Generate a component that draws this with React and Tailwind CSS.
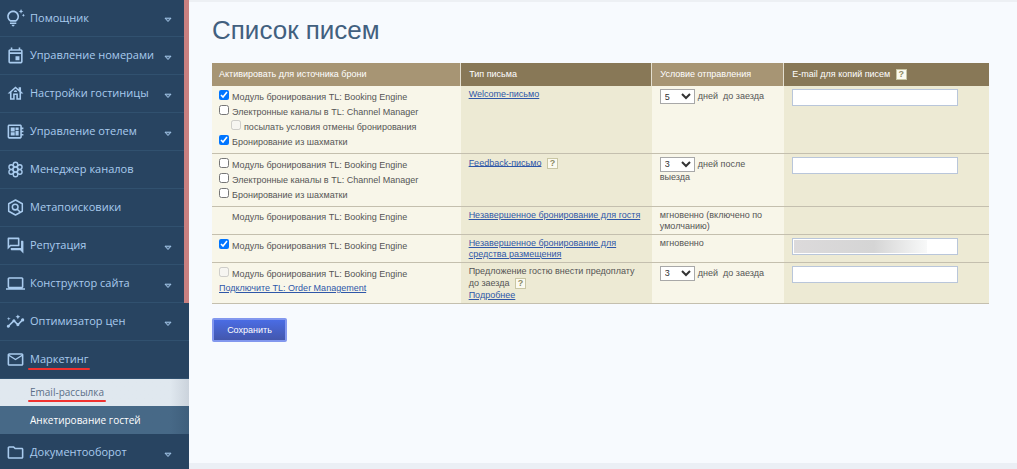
import {
  MdLaptop,
  MdMailOutline,
  MdOutlineDeveloperBoard,
  MdOutlineEvent,
  MdOutlineFolder,
  MdOutlineForum,
  MdOutlineHouse,
  MdOutlineInsights,
  MdOutlineTipsAndUpdates,
} from "react-icons/md";

const MENU = [
  { label: "Помощник", icon: MdOutlineTipsAndUpdates, arrow: true },
  { label: "Управление номерами", icon: MdOutlineEvent, arrow: true },
  { label: "Настройки гостиницы", icon: MdOutlineHouse, arrow: true },
  { label: "Управление отелем", icon: MdOutlineDeveloperBoard, arrow: true },
  { label: "Менеджер каналов", icon: ChannelsIcon },
  { label: "Метапоисковики", icon: MetaSearchIcon },
  { label: "Репутация", icon: MdOutlineForum, arrow: true },
  { label: "Конструктор сайта", icon: MdLaptop, arrow: true },
  { label: "Оптимизатор цен", icon: MdOutlineInsights, arrow: true },
  { label: "Маркетинг", icon: MdMailOutline, marked: true },
];

const ENGINE = "Модуль бронирования TL: Booking Engine";
const CHANNELS = "Электронные каналы в TL: Channel Manager";
const BOARD = "Бронирование из шахматки";

export default function App() {
  return (
    <div className="flex min-h-screen bg-[#f7fafe] font-['Liberation_Sans',Arial,sans-serif]">
      <Sidebar />
      <main className="flex min-w-0 flex-1 flex-col border-t-2 border-b-6 border-t-[#edf0f4] border-b-[#ebeff5] pr-7 pl-[23px]">
        <h1 className="mt-3 text-[26px] leading-8 text-[#42607f]">Список писем</h1>
        <LettersTable />
        <div className="mt-3">
          <button
            type="button"
            className="h-6 w-[75px] rounded-xs border-2 border-[#8297ee] bg-linear-to-b from-[#4a6ce4] to-[#4357ad] text-[9px] text-white"
          >
            Сохранить
          </button>
        </div>
      </main>
    </div>
  );
}

function Sidebar() {
  return (
    <aside className="relative h-screen w-[189px] shrink-0 overflow-hidden bg-[#284461] font-['Open_Sans','Noto_Sans',sans-serif] text-[11px] text-[#a9cbee]">
      <nav>
        {MENU.map((item) => (
          <MenuItem key={item.label} {...item} />
        ))}
        <a
          href="#mailing"
          className="flex h-[27px] items-center bg-linear-to-r from-[#e0e8ef] from-90% to-[#cbd3dc] pl-[30px] text-[10px] text-[#5c6f88]"
        >
          <span className="relative">
            Email-рассылка
            <Underline />
          </span>
        </a>
        <a
          href="#survey"
          className="flex h-7 items-center bg-linear-to-r from-[#476987] from-90% to-[#3f5f7c] pl-[30px] text-[10px] font-medium text-white"
        >
          Анкетирование гостей
        </a>
        <MenuItem label="Документооборот" icon={MdOutlineFolder} arrow />
      </nav>
      {/* Scroll thumb */}
      <div className="absolute top-0 right-0 h-[303px] w-[5px] bg-[#c98080]" />
    </aside>
  );
}

function MenuItem({ label, icon: Icon, arrow, marked }) {
  return (
    <a
      href="#menu"
      className="flex h-[38px] items-center border-b border-[#31516f] pr-[17px] pl-[6px] first:h-[37px]"
    >
      <Icon className="mr-[5px] size-[19px] shrink-0" />
      <span className="relative whitespace-nowrap">
        {label}
        {marked && <Underline />}
      </span>
      {arrow && (
        <svg viewBox="0 0 8 6" className="mt-1 ml-auto h-[6px] w-2 shrink-0" fill="none" stroke="currentColor">
          <path d="M1 1.2h6L4 4.5z" fill="currentColor" fillOpacity="0.25" />
        </svg>
      )}
    </a>
  );
}

function Underline() {
  return <span className="absolute -inset-x-[2px] -bottom-[2px] h-[2px] rounded-full bg-[#f0312f]" />;
}

function ChannelsIcon({ className }) {
  return (
    <svg viewBox="0 0 24 24" className={className} fill="none" stroke="currentColor" strokeWidth="1.7">
      <circle cx="12" cy="12" r="3" />
      <circle cx="12" cy="5.8" r="2.9" />
      <circle cx="12" cy="18.2" r="2.9" />
      <circle cx="6.6" cy="8.9" r="2.9" />
      <circle cx="17.4" cy="8.9" r="2.9" />
      <circle cx="6.6" cy="15.1" r="2.9" />
      <circle cx="17.4" cy="15.1" r="2.9" />
    </svg>
  );
}

function MetaSearchIcon({ className }) {
  return (
    <svg viewBox="0 0 24 24" className={className} fill="none" stroke="currentColor" strokeWidth="1.9">
      <path d="M12 2.5l8.6 4.8v9.4L12 21.5l-8.6-4.8V7.3z" strokeLinejoin="round" />
      <circle cx="11.6" cy="11.4" r="3.6" />
      <path d="M14.2 14.2l3.6 3.6" />
    </svg>
  );
}

function LettersTable() {
  return (
    <table className="mt-[17px] w-full table-fixed border-collapse text-left text-[9px] leading-[11px] text-[#555]">
      <thead>
        <tr className="h-[23px] text-white">
          <th className="w-[32%] border-r border-[#e4dfd0] bg-[#a79574] px-[7px] font-normal">
            Активировать для источника брони
          </th>
          <th className="w-[24.6%] border-r border-[#e4dfd0] bg-[#887857] px-2 font-normal">Тип письма</th>
          <th className="w-[17%] border-r border-[#e4dfd0] bg-[#a79574] px-2 font-normal">
            Условие отправления
          </th>
          <th className="bg-[#887857] px-2 font-normal">
            E-mail для копий писем <Help />
          </th>
        </tr>
      </thead>
      <tbody>
        <Row
          height="h-[67px]"
          sources={
            <>
              <Source label={ENGINE} defaultChecked />
              <Source label={CHANNELS} />
              <Source label="посылать условия отмены бронирования" nested disabled />
              <Source label={BOARD} defaultChecked />
            </>
          }
          letter={<Link>Welcome-письмо</Link>}
          condition={<Days value="5" text="дней &nbsp;до заезда" />}
          email={<Email />}
        />
        <Row
          height="h-[53px]"
          sources={
            <>
              <Source label={ENGINE} />
              <Source label={CHANNELS} />
              <Source label={BOARD} />
            </>
          }
          letter={
            <>
              <Link>Feedback-письмо</Link> <Help />
            </>
          }
          condition={<Days value="3" text="дней после выезда" />}
          email={<Email />}
        />
        <Row
          height="h-7"
          sources={<div className="pl-[13px] leading-[15px]">{ENGINE}</div>}
          letter={<Link>Незавершенное бронирование для гостя</Link>}
          condition="мгновенно (включено по умолчанию)"
        />
        <Row
          height="h-7"
          sources={<Source label={ENGINE} defaultChecked />}
          letter={<Link>Незавершенное бронирование для средства размещения</Link>}
          condition="мгновенно"
          email={<Email hidden />}
        />
        <Row
          height="h-[41px]"
          sources={
            <>
              <Source label={ENGINE} disabled />
              <div className="leading-[15px]">
                <Link>Подключите TL: Order Management</Link>
              </div>
            </>
          }
          letter={
            <>
              Предложение гостю внести предоплату до заезда <Help />
              <br />
              <Link>Подробнее</Link>
            </>
          }
          condition={<Days value="3" text="дней &nbsp;до заезда" />}
          email={<Email />}
        />
      </tbody>
    </table>
  );
}

function Row({ height, sources, letter, condition, email }) {
  return (
    <tr className={`${height} border-b border-[#c4bfae] align-top`}>
      <td className="bg-[#f8f6e9] px-[7px] pt-[3px]">{sources}</td>
      <td className="bg-[#edead4] px-2 pt-[3px]">{letter}</td>
      <td className="bg-[#f8f6e9] px-2 pt-[3px]">{condition}</td>
      <td className="bg-[#edead4] px-2 pt-[3px]">{email}</td>
    </tr>
  );
}

function Source({ label, nested, ...props }) {
  return (
    <label className={`flex h-[15px] gap-[3px] leading-4 ${nested ? "pl-3" : ""}`}>
      <input type="checkbox" className="mt-px size-[10px] shrink-0 accent-[#0075ff]" {...props} />
      {label}
    </label>
  );
}

function Link({ children }) {
  return (
    <a href="#letter" className="text-[#2f57a8] underline">
      {children}
    </a>
  );
}

function Days({ value, text }) {
  return (
    <>
      <select
        aria-label="Количество дней"
        defaultValue={value}
        className="mr-[3px] h-[15px] w-[35px] rounded-none border border-[#a8a8a8] bg-white align-middle text-[9px] text-[#333]"
      >
        <option>3</option>
        <option>5</option>
      </select>
      {text}
    </>
  );
}

function Email({ hidden }) {
  return (
    <div className="relative w-[88%]">
      <input
        type="email"
        aria-label="E-mail для копий"
        className="block h-[17px] w-full border border-[#b9c6da] bg-white px-1 text-[9px]"
      />
      {hidden && (
        <div className="absolute inset-y-[2px] left-[2px] w-4/5 bg-linear-to-r from-[#dcdadb] via-[#d5d5d5] via-60% to-[#f8f9f9]" />
      )}
    </div>
  );
}

function Help() {
  return (
    <button
      type="button"
      aria-label="Справка"
      className="my-px ml-[3px] inline-flex size-[11px] items-center justify-center border border-[#c9c6a4] bg-[#fbfaf0] align-middle text-[9px] leading-[9px] font-bold text-[#8d8a64]"
    >
      ?
    </button>
  );
}
